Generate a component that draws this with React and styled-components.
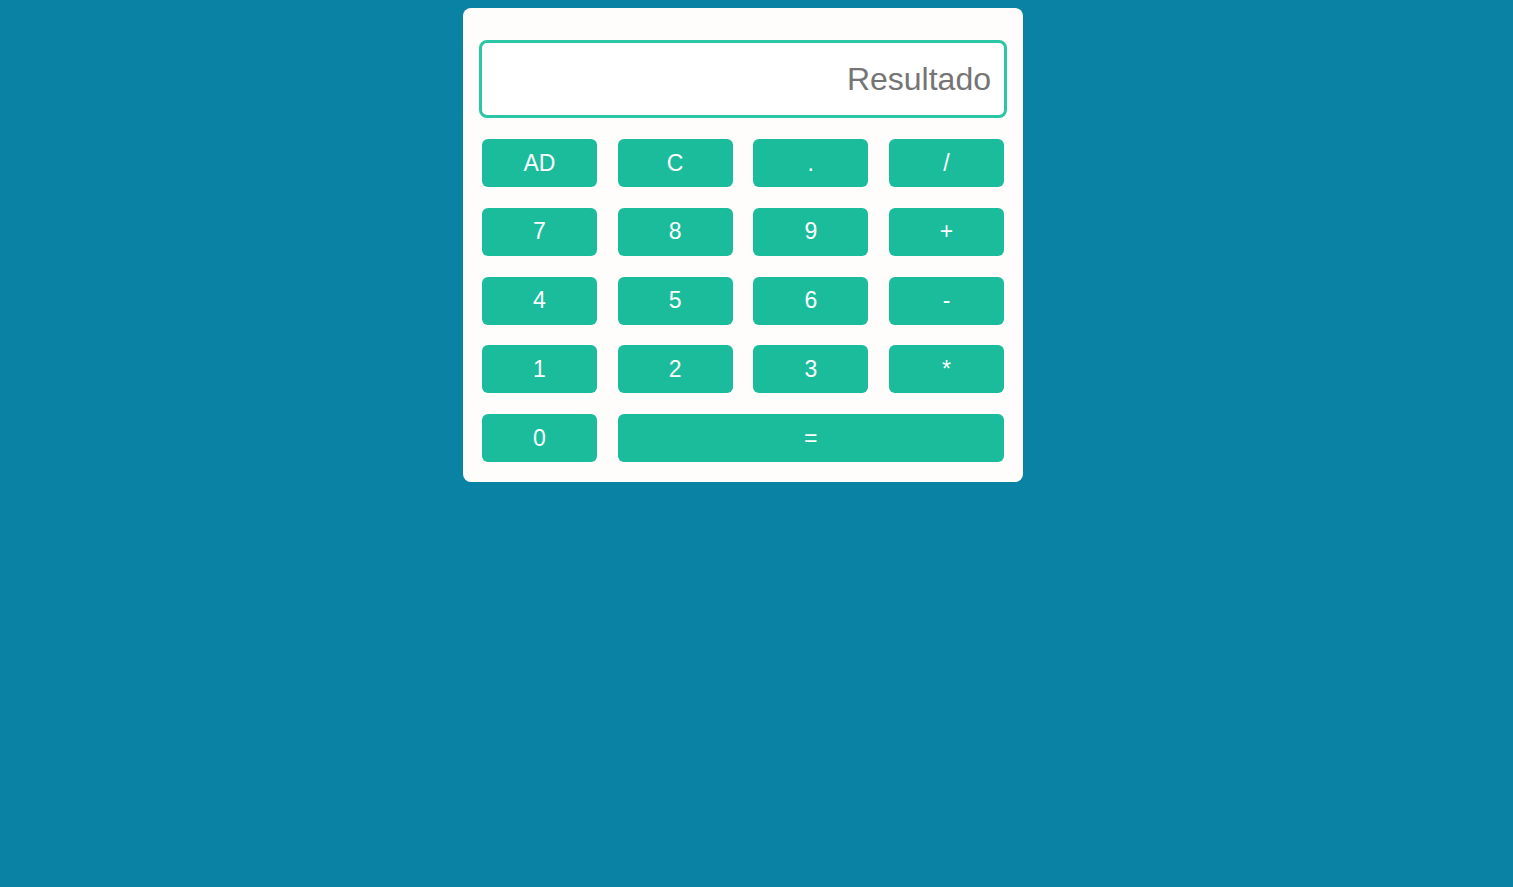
import React, { useState } from 'react';
import styled, { createGlobalStyle } from 'styled-components';

const Global = createGlobalStyle`
  body {
    margin: 8px;
    background: #0982a3;
    font-family: "Liberation Sans", Arial, sans-serif;
  }
`;

const Page = styled.div`
  display: flex;
  justify-content: center;
  padding-right: 27px;
`;

const Card = styled.div`
  width: 560px;
  box-sizing: border-box;
  background: #fefdfc;
  border-radius: 8px;
  padding: 32px 16px 20px;
`;

const Display = styled.input`
  display: block;
  width: 100%;
  height: 78px;
  box-sizing: border-box;
  border: 3px solid #2bc6a6;
  border-radius: 8px;
  background: #fff;
  padding: 0 13px;
  text-align: right;
  font-family: "Liberation Sans", Arial, sans-serif;
  font-size: 32px;
  color: #555;
  outline: none;
  &::placeholder { color: #757575; }
`;

const Keys = styled.div`
  display: grid;
  grid-template-columns: repeat(4, 115px);
  justify-content: space-between;
  row-gap: 20.75px;
  margin: 21px 3px 0;
`;

const Key = styled.button`
  grid-column: span ${p => p.$span || 1};
  height: 48px;
  border: none;
  border-radius: 6px;
  background: #1abc9c;
  color: #fff;
  font-family: "Liberation Sans", Arial, sans-serif;
  font-size: 23px;
  cursor: pointer;
  padding: 0;
`;

const layout = [
  ['AD'], ['C'], ['.'], ['/'],
  ['7'], ['8'], ['9'], ['+'],
  ['4'], ['5'], ['6'], ['-'],
  ['1'], ['2'], ['3'], ['*'],
  ['0'], ['=', 3],
];

export default function App() {
  const [value, setValue] = useState('');

  const press = (k) => {
    if (k === 'AD') return setValue('');
    if (k === 'C') return setValue(value.slice(0, -1));
    if (k === '=') {
      try {
        // eslint-disable-next-line no-new-func
        setValue(String(Function('return (' + value + ')')()));
      } catch (e) {
        setValue('');
      }
      return;
    }
    setValue(value + k);
  };

  return (
    <Page>
      <Global />
      <Card>
        <Display placeholder="Resultado" value={value} readOnly />
        <Keys>
          {layout.map(([k, span]) => (
            <Key key={k} $span={span} onClick={() => press(k)}>{k}</Key>
          ))}
        </Keys>
      </Card>
    </Page>
  );
}
